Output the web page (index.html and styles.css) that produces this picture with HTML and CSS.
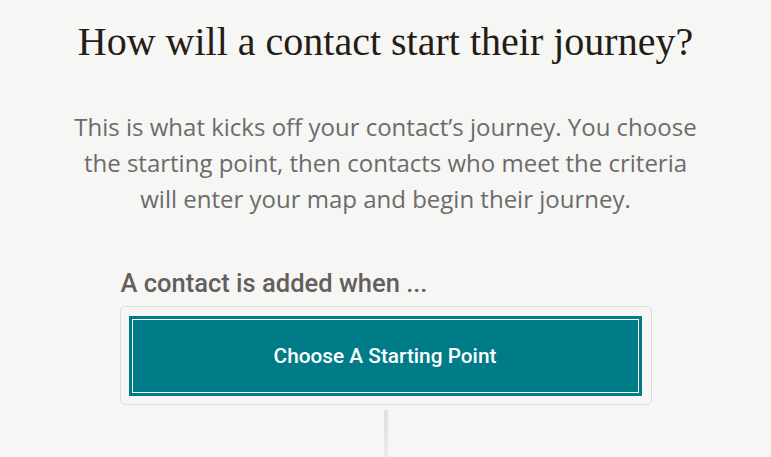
FILE: index.html
```html
<!DOCTYPE html>
<html lang="en">
<head>
    <meta charset="UTF-8">
    <meta name="viewport" content="width=device-width, initial-scale=1.0">
    <title>Customer Journey - Starting Point</title>
    <link rel="stylesheet" href="styles.css">
</head>
<body>
    <main class="intro">
        <h1 class="intro-title">How will a contact start their journey?</h1>
        <p class="intro-text">This is what kicks off your contact’s journey. You choose the starting point, then contacts who meet the criteria will enter your map and begin their journey.</p>
        <section class="starter">
            <h2 class="starter-label">A contact is added when ...</h2>
            <div class="starter-box">
                <button class="starter-button" type="button">Choose A Starting Point</button>
            </div>
            <div class="connector"></div>
        </section>
    </main>
</body>
</html>
```

FILE: styles.css
```css
body {
    margin: 0;
    padding: 0;
    background-color: #f6f6f4;
    font-family: "Liberation Sans", Arial, sans-serif;
    color: #241c15;
    overflow: hidden;
}

.intro {
    display: flex;
    flex-direction: column;
    align-items: center;
    padding-top: 18px;
}

.intro-title {
    margin: 0;
    font-family: "Liberation Serif", "Times New Roman", serif;
    font-size: 40px;
    font-weight: normal;
    line-height: 48px;
    color: #241c15;
}

.intro-text {
    width: 632px;
    margin: 43px 0 0;
    font-family: "Open Sans", Roboto, sans-serif;
    font-size: 24px;
    font-weight: 400;
    line-height: 36px;
    text-align: center;
    color: #6d6b69;
}

.starter {
    width: 532px;
    margin-top: 52px;
    display: flex;
    flex-direction: column;
}

.starter-label {
    margin: 0 0 9px 1px;
    font-family: Roboto, "Liberation Sans", sans-serif;
    font-size: 25.5px;
    font-weight: 500;
    line-height: 28px;
    color: #625f5c;
}

.starter-box {
    border: 1px solid #dcdcda;
    border-radius: 5px;
    padding: 9px 9px 8px 8px;
}

.starter-button {
    display: block;
    width: 100%;
    height: 80px;
    background-color: #007c89;
    border: 0;
    outline: 1px solid #ffffff;
    outline-offset: -4px;
    color: #ffffff;
    font-family: Roboto, "Liberation Sans", sans-serif;
    font-size: 20.8px;
    font-weight: 500;
    cursor: pointer;
}

.connector {
    width: 4px;
    height: 60px;
    margin: 5px auto 0;
    background: linear-gradient(#dededc, #efefed);
}
```
